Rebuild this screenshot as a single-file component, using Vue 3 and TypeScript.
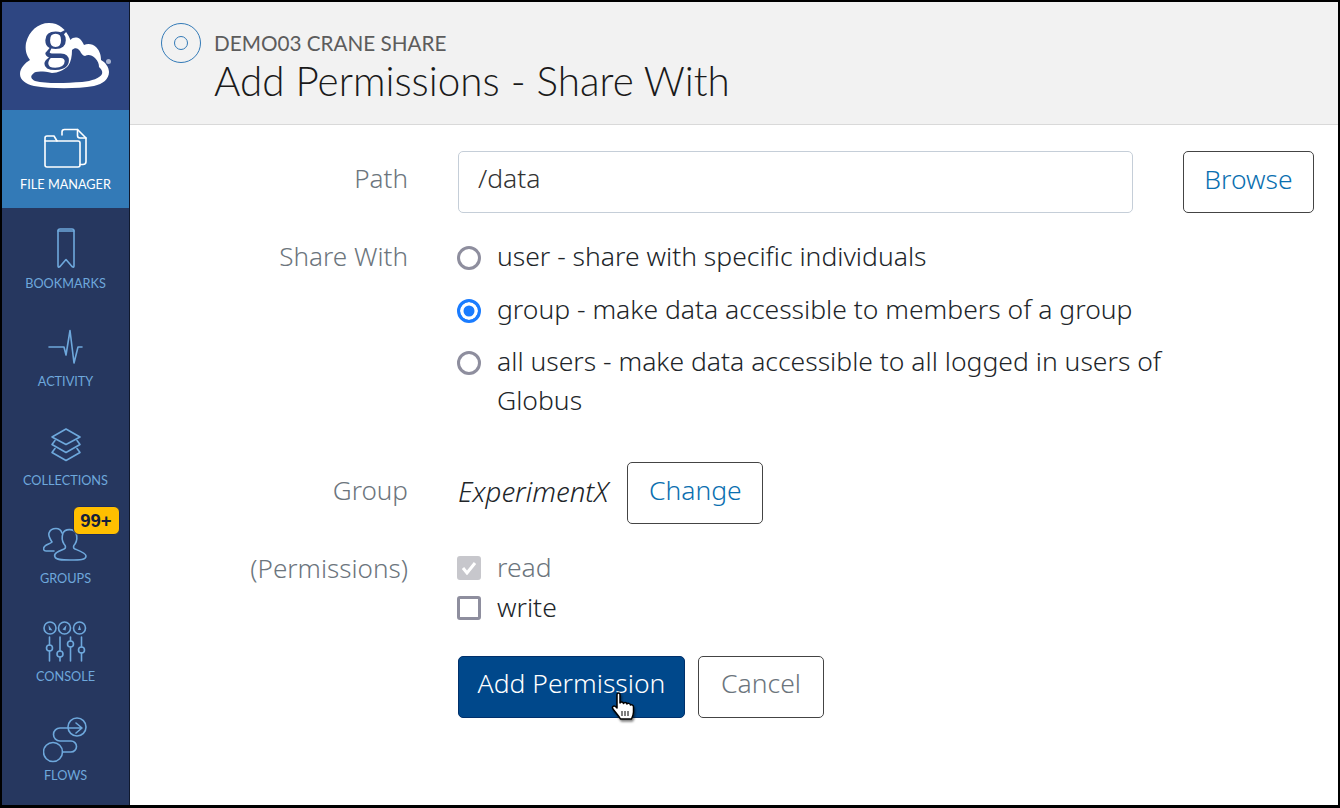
<script setup lang="ts">
import { ref } from 'vue';

type NavKey = 'file' | 'bookmarks' | 'activity' | 'collections' | 'groups' | 'console' | 'flows';

const navItems: { key: NavKey; label: string }[] = [
  { key: 'file', label: 'FILE MANAGER' },
  { key: 'bookmarks', label: 'BOOKMARKS' },
  { key: 'activity', label: 'ACTIVITY' },
  { key: 'collections', label: 'COLLECTIONS' },
  { key: 'groups', label: 'GROUPS' },
  { key: 'console', label: 'CONSOLE' },
  { key: 'flows', label: 'FLOWS' },
];

const shareOptions = [
  { value: 'user', label: 'user - share with specific individuals' },
  { value: 'group', label: 'group - make data accessible to members of a group' },
  { value: 'all', label: 'all users - make data accessible to all logged in users of Globus' },
];

const path = ref('/data');
const shareWith = ref('group');
const canWrite = ref(false);
</script>

<template>
  <div class="frame">
    <nav class="sidebar">
      <div class="logo">
        <svg width="92" height="68" viewBox="0 0 92 68">
          <path class="cloud" d="M14 64C6 62 0 58 0 52C0 46 5 41 10 38C6 33 5 27 6 21C9 9 18 1 29 1C39 1 46 7 50.500 18C53 15 57 15 60 17C62 19 63 21 64 23C68 21 73 22 76 25C79 28 81 32 81 38C85 40 89 45 89 50C89 57 83 62 74 64C56 67 32 67 14 64Z" />
          <path class="cloud-cut" d="M15 59C11 57 10 54 13 52C15 49 22 49 32 51C38 51 44 48 48 44C51 40 52 34 52 28C55 25 58 26 60 29C61 31 63 34 65 34C68 32 72 33 75 36C78 39 79 42 79 45C81 47 83 49 82 52C80 56 72 59 62 60C46 61 27 62 15 59Z" />
        </svg>
        <span class="logo-g">g</span>
        <span class="logo-dot"></span>
      </div>
      <a
        v-for="item in navItems"
        :key="item.key"
        class="nav-item"
        :class="{ active: item.key === 'file' }"
      >
        <span class="nav-icon" :class="`icon-${item.key}`">
          <svg v-if="item.key === 'file'" width="44" height="41" viewBox="0 0 44 41">
            <path d="M18 7V4Q18 1.500 20.500 1.500H33.500L42 10V33.500Q42 36.500 39 36.500H36" />
            <path d="M33.500 1.500V7.500Q33.500 10 36 10H42" />
            <path d="M1 37V10Q1 8 3 8H10L13 13H34Q36 13 36 15V37Q36 39 34 39H3Q1 39 1 37Z" />
            <path d="M1 13H13" />
          </svg>
          <svg v-else-if="item.key === 'bookmarks'" width="20" height="42" viewBox="0 0 20 42">
            <path d="M2 4Q2 2 4 2H16Q18 2 18 4V39Q18 41 16 39.500L10 32.500L4 39.500Q2 41 2 39Z" />
            <path d="M2 4H18" />
          </svg>
          <svg v-else-if="item.key === 'activity'" width="36" height="36" viewBox="0 0 36 36">
            <path d="M1 18H16L18 26L22 1.500L26 34L30 18H34" />
          </svg>
          <svg v-else-if="item.key === 'collections'" width="32" height="34" viewBox="0 0 32 34">
            <path d="M16 1L30 9L16 16.500L2 9Z" />
            <path d="M5 12.500L2 16.500L16 24.500L30 16.500L27 12.500" />
            <path d="M5 20.500L2 24.500L16 32.500L30 24.500L27 20.500" />
          </svg>
          <svg v-else-if="item.key === 'groups'" width="46" height="34" viewBox="1 0 46 34">
            <path d="M12 24H4C1 24 1 21 3 19C5 17 8 17 10 15C8 12 6 9 7 6C8 3 11 1.500 14 1.500C17 1.500 19 3 20 6" />
            <path d="M13 30C11 26 17 24 22 22C24 21 24 19 22 17C20 14 20 9 21 6C23 2 31 1 34 6C35 9 35 14 33 17C31 19 31 21 33 22C38 24 44 26 44 29C44 33 38 33 28 33C20 33 14 33 13 30Z" />
          </svg>
          <svg v-else-if="item.key === 'console'" width="46" height="42" viewBox="0 0 46 42">
            <circle cx="7" cy="7" r="6" />
            <circle cx="21.500" cy="7" r="6" />
            <circle cx="36.500" cy="7" r="6" />
            <path class="dial" d="M5.500 4L9.500 9.500L6 9ZM23.500 4L22.500 9.500L19.500 8.500ZM36.500 4L38 9H35Z" />
            <path d="M6.500 16V24M6.500 30V40M17 16V30M17 36V40M27.500 16V20M27.500 26V40M38.500 16V26M38.500 32V40" />
            <circle cx="6.500" cy="27" r="3" />
            <circle cx="17" cy="33" r="3" />
            <circle cx="27.500" cy="23" r="3" />
            <circle cx="38.500" cy="29" r="3" />
          </svg>
          <svg v-else width="46" height="46" viewBox="0 0 46 46">
            <circle cx="34" cy="10" r="9" />
            <path d="M26 11H39M33 6L39 11L33 16" />
            <circle cx="10" cy="35" r="9.500" />
            <path d="M25 11H17A6.500 6.500 0 0 0 17 24H28A5.500 5.500 0 0 1 28 35H19.500" />
          </svg>
          <span v-if="item.key === 'groups'" class="badge">99+</span>
        </span>
        <span class="nav-label">{{ item.label }}</span>
      </a>
    </nav>

    <main class="content">
      <header class="page-header">
        <span class="share-icon"><span></span></span>
        <div class="titles">
          <div class="crumb">DEMO03 CRANE SHARE</div>
          <h1>Add Permissions - Share With</h1>
        </div>
      </header>

      <form class="form" @submit.prevent>
        <div class="row row-path">
          <label class="field-label">Path</label>
          <input v-model="path" class="text-input" type="text" />
          <button type="button" class="btn btn-outline browse">Browse</button>
        </div>

        <div class="row row-share">
          <label class="field-label">Share With</label>
          <div class="options">
            <label v-for="opt in shareOptions" :key="opt.value" class="option">
              <input v-model="shareWith" type="radio" name="share" :value="opt.value" />
              <span class="radio"></span>
              <span>{{ opt.label }}</span>
            </label>
          </div>
        </div>

        <div class="row row-group">
          <label class="field-label">Group</label>
          <em class="group-name">ExperimentX</em>
          <button type="button" class="btn btn-outline change">Change</button>
        </div>

        <div class="row row-perms">
          <label class="field-label">(Permissions)</label>
          <div class="checks">
            <label class="check disabled">
              <span class="box checked">
                <svg width="16" height="14" viewBox="0 0 16 14"><path d="M2 7L6 12L14 2" /></svg>
              </span>
              <span class="check-text">read</span>
            </label>
            <label class="check">
              <input v-model="canWrite" type="checkbox" />
              <span class="box"></span>
              <span class="check-text">write</span>
            </label>
          </div>
        </div>

        <div class="actions">
          <button type="submit" class="btn btn-primary">
            Add Permission
            <svg class="cursor" width="26" height="30" viewBox="0 0 26 30">
              <path d="M7 2.500C7 0.500 10 0.500 10 2.500V11C10.500 9.500 13 9.500 13.500 11.500C14 10 16.500 10 17 12C17.500 11 20 11 20.500 13C21 12.500 23.500 12.500 23.500 15V20C23.500 23 22.500 25 21.500 27H10.500C9 24 6 21 3 17C1.500 15 3.500 13 5.500 14.500L7 16Z" />
              <path class="cursor-lines" d="M12 19V24M15 19V24M18 19V24" />
            </svg>
          </button>
          <button type="button" class="btn btn-outline cancel">Cancel</button>
        </div>
      </form>
    </main>
  </div>
</template>

<style scoped>
.frame {
  display: flex;
  width: 1340px;
  height: 808px;
  box-sizing: border-box;
  border: 2px solid #000;
  border-bottom-width: 3px;
  background: #fff;
  font-family: "Noto Sans", Lato, sans-serif;
  color: #212529;
  overflow: hidden;
}

.sidebar {
  flex: 0 0 127px;
  display: flex;
  flex-direction: column;
  background: #26375f;
  border-right: 1px solid #10192e;
}

.logo {
  position: relative;
  height: 108px;
  background: #2e4682;
  display: flex;
  align-items: center;
  justify-content: center;
}

.cloud { fill: #fff; }
.cloud-cut { fill: #2e4682; }

.logo-g {
  position: absolute;
  left: 40px;
  top: 7px;
  font-family: "Liberation Serif", serif;
  font-size: 56px;
  line-height: 60px;
  color: #2e4682;
}

.logo-dot {
  position: absolute;
  left: 104px;
  top: 57px;
  width: 5px;
  height: 5px;
  border-radius: 50%;
  background: #a9b5d2;
}

.nav-item {
  height: 98.400px;
  display: flex;
  flex-direction: column;
  align-items: center;
  justify-content: flex-end;
  padding-bottom: 17px;
  box-sizing: border-box;
  color: #6ea8dc;
  font-family: Lato, sans-serif;
}

.nav-item.active {
  background: #337ab7;
  color: #fff;
}

.nav-icon {
  position: relative;
  display: flex;
  align-items: flex-end;
  justify-content: center;
  height: 46px;
  margin-bottom: 7px;
}

.icon-file { margin-bottom: 8px; }
.icon-activity { margin-bottom: 9px; }
.icon-collections { margin-bottom: 11px; }
.icon-groups { margin-bottom: 10px; }
.icon-console { margin-bottom: 6px; }
.icon-flows { margin-bottom: 5px; }

.nav-icon svg {
  fill: none;
  stroke: currentColor;
  stroke-width: 1.600;
  stroke-linejoin: round;
  stroke-linecap: round;
}

.nav-icon .dial {
  fill: currentColor;
  stroke: none;
}

.nav-label {
  font-size: 12.700px;
  line-height: 14px;
  white-space: nowrap;
}

.badge {
  position: absolute;
  left: 30px;
  top: -9px;
  width: 47px;
  height: 29px;
  border-radius: 6px;
  background: #ffbf00;
  border: 1px solid #1d2c5c;
  box-sizing: border-box;
  color: #16203c;
  font-family: "Liberation Sans", sans-serif;
  font-size: 18.500px;
  font-weight: 700;
  line-height: 27px;
  text-align: center;
}

.content {
  flex: 1;
  min-width: 0;
  display: flex;
  flex-direction: column;
}

.page-header {
  display: flex;
  height: 123px;
  box-sizing: border-box;
  padding: 21px 0 0 31px;
  background: #f2f2f2;
  border-bottom: 1px solid #d9d9d9;
  font-family: Lato, sans-serif;
}

.share-icon {
  flex: 0 0 40px;
  width: 40px;
  height: 40px;
  box-sizing: border-box;
  border: 1px solid #337ab7;
  border-radius: 50%;
  display: flex;
  align-items: center;
  justify-content: center;
}

.share-icon span {
  width: 14px;
  height: 14px;
  box-sizing: border-box;
  border: 1px solid #337ab7;
  border-radius: 50%;
}

.titles {
  margin-left: 13px;
}

.crumb {
  font-size: 20.700px;
  line-height: 26px;
  margin-top: 7px;
  color: #5c5c5c;
}

h1 {
  margin: 3px 0 0;
  font-size: 40.400px;
  line-height: 44px;
  font-weight: 300;
  color: #1a1a1a;
}

.form {
  padding: 26px 24px 0 0;
  font-size: 26.500px;
  font-weight: 350;
}

.row {
  display: flex;
  align-items: flex-start;
}

.field-label {
  flex: 0 0 278px;
  text-align: right;
  margin-right: 50px;
  font-size: 26.100px;
  line-height: 39px;
  color: #6c757d;
}

.row-path {
  height: 62px;
  align-items: center;
}

.row-path .field-label {
  margin-top: -8px;
}

.row-group .field-label {
  margin-top: -4px;
}

.text-input {
  width: 675px;
  height: 62px;
  box-sizing: border-box;
  padding: 0 19px 8px;
  border: 1px solid #c5ced8;
  border-radius: 5px;
  font: inherit;
  color: #333;
  outline: none;
}

.browse {
  margin-left: 50px;
  width: 131px;
}

.btn {
  height: 62px;
  padding: 0 20px 7px;
  box-sizing: border-box;
  border-radius: 5px;
  font: inherit;
  cursor: pointer;
}

.btn-outline {
  background: #fff;
  border: 1px solid #444;
  color: #0a6fb0;
}

.btn-primary {
  position: relative;
  width: 227px;
  padding-left: 0;
  padding-right: 0;
  background: #00488b;
  border: 1px solid #00306b;
  color: #fff;
}

.change {
  width: 136px;
  padding-bottom: 6px;
}

.cancel {
  width: 126px;
  color: #6c757d;
}

.cursor {
  position: absolute;
  left: 151px;
  top: 35px;
  fill: #fff;
  stroke: #000;
  stroke-width: 1.500;
  stroke-linejoin: round;
  filter: drop-shadow(1px 2px 1px rgba(0, 0, 0, 0.5));
}

.cursor-lines {
  fill: none;
  stroke-width: 1;
}

.row-share {
  margin-top: 24px;
}

.options {
  flex: 1;
  padding-right: 120px;
}

.option {
  display: flex;
  align-items: flex-start;
  line-height: 39px;
  margin-bottom: 13.500px;
}

.option input,
.check input {
  position: absolute;
  opacity: 0;
  width: 0;
  height: 0;
}

.radio {
  flex: 0 0 24px;
  width: 24px;
  height: 24px;
  margin: 9px 16px 0 -1px;
  box-sizing: border-box;
  border: 3px solid #8e8e9e;
  border-radius: 50%;
  background: #fff;
}

.option input:checked + .radio {
  border-color: #1a7cff;
  background: #1a7cff;
  box-shadow: inset 0 0 0 3.500px #fff;
}

.row-group {
  align-items: center;
  margin-top: 28px;
  height: 62px;
}

.group-name {
  margin-right: 19px;
  margin-top: -4px;
  font-size: 27.700px;
  color: #212529;
}

.row-perms {
  margin-top: 25px;
}

.checks {
  display: flex;
  flex-direction: column;
}

.check {
  display: flex;
  align-items: center;
  height: 39.500px;
}

.check-text {
  margin-top: -2px;
}

.check.disabled {
  color: #6c757d;
}

.box {
  flex: 0 0 24px;
  width: 24px;
  height: 24px;
  margin: 0 16px 0 -1px;
  box-sizing: border-box;
  border: 3px solid #8e8e9e;
  border-radius: 3px;
  background: #fff;
  display: flex;
  align-items: center;
  justify-content: center;
}

.box.checked {
  border-color: #c7c7cc;
  background: #c7c7cc;
}

.box svg {
  fill: none;
  stroke: #fff;
  stroke-width: 3;
}

.actions {
  display: flex;
  gap: 13px;
  margin: 28px 0 0 328px;
}
</style>

<style>
body {
  margin: 0;
}
</style>
